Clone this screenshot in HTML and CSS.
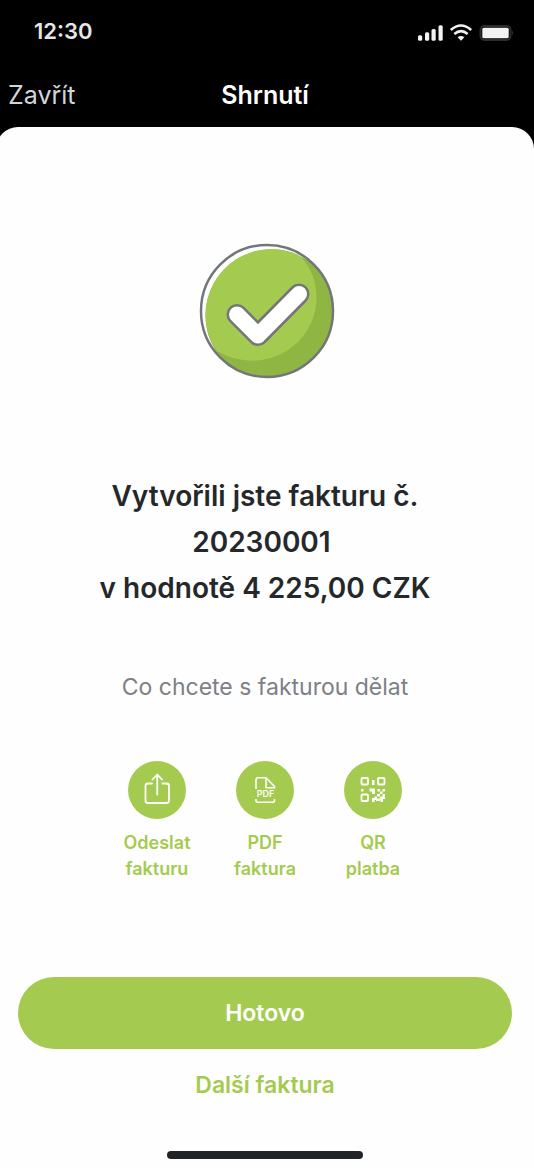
FILE: index.html
```html
<!DOCTYPE html>
<html lang="cs">
<head>
<meta charset="utf-8">
<meta name="viewport" content="width=device-width, initial-scale=1">
<title>Shrnutí</title>
<link rel="stylesheet" href="styles.css">
</head>
<body>
<div class="screen">
  <div class="status">
    <time class="clock">12:30</time>
    <svg class="status-icons" width="100" height="20" viewBox="0 -1 100 20" aria-hidden="true">
      <g fill="#f2f2f2">
        <rect x="4" y="13.300" width="4.200" height="5.500" rx="1.500"/>
        <rect x="11" y="10.300" width="4.200" height="8.500" rx="1.500"/>
        <rect x="17.500" y="7" width="4.200" height="11.800" rx="1.500"/>
        <rect x="24.500" y="3.300" width="4.200" height="15.500" rx="1.500"/>
        <path d="M47 18.800 L43.600 15.300 Q47 12.700 50.400 15.300 Z"/>
        <rect x="68.300" y="5.800" width="26.400" height="10.400" rx="1.500"/>
      </g>
      <g fill="none" stroke="#f2f2f2" stroke-width="2.500">
        <path d="M36.800 8 Q47 -1 57.200 8"/>
        <path d="M40.300 12 Q47 6.300 53.700 12"/>
      </g>
      <rect x="66.500" y="4" width="30" height="14" rx="4" fill="none" stroke="#2c2c2c" stroke-width="2"/>
      <path d="M98 8.500 Q100.500 11 98 13.500 Z" fill="#2c2c2c"/>
    </svg>
  </div>
  <header class="nav">
    <button class="close" type="button">Zavřít</button>
    <h1 class="nav-title">Shrnutí</h1>
  </header>
  <main class="sheet">
    <svg class="success" width="160" height="160" viewBox="-2 0 160 160" aria-hidden="true">
      <defs><clipPath id="disc"><circle cx="80" cy="81" r="66"/></clipPath></defs>
      <circle cx="80" cy="81" r="66" fill="#fff"/>
      <g clip-path="url(#disc)">
        <circle cx="84.500" cy="85.500" r="66" fill="#8fb543"/>
        <path d="M18.500 85.500 A66 66 0 0 1 112 25 C136 48 135 88 111 112 C88 134 56 136 30 121 Q18.500 105 18.500 85.500 Z" fill="#a4cb50"/>
      </g>
      <circle cx="80" cy="81" r="66" fill="none" stroke="#71767b" stroke-width="2.500"/>
      <g fill="none" stroke-linecap="round" stroke-linejoin="round">
        <path d="M50 84.500 L71 105.500 L112 64" stroke="#71767b" stroke-width="21"/>
        <path d="M50 84.500 L71 105.500 L112 64" stroke="#fff" stroke-width="16"/>
      </g>
    </svg>
    <h2 class="headline">Vytvořili jste fakturu č.<br>20230001&nbsp;<br>v hodnotě 4 225,00 CZK</h2>
    <p class="question">Co chcete s fakturou dělat</p>
    <div class="actions">
      <button class="action" type="button">
        <span class="disc"><svg width="58" height="58" viewBox="0 0 58 58" fill="none" stroke="#fff" stroke-width="1.800" stroke-linecap="round" stroke-linejoin="round" aria-hidden="true">
          <path d="M24 22.500 H20 Q17.500 22.500 17.500 25 V39.500 Q17.500 42 20 42 H38.500 Q41 42 41 39.500 V25 Q41 22.500 38.500 22.500 H34.500 M29.250 33.500 V14 M24.500 18.500 L29.250 13.500 L34 18.500"/>
        </svg></span>
        <span class="label">Odeslat fakturu</span>
      </button>
      <button class="action" type="button">
        <span class="disc"><svg width="58" height="58" viewBox="0 0 58 58" fill="none" stroke="#fff" stroke-width="1.600" stroke-linejoin="round" aria-hidden="true">
          <path d="M20 28 V19 Q20 16.800 22 16.800 H30 L38.500 25.500 V27.500 M30 16.800 V26.800 H38.500 M20 38 V39.500 Q20 41.200 22 41.200 H36.500 Q38.500 41.200 38.500 39.500 V38"/>
          <text class="pdf" x="29.500" y="36" text-anchor="middle" stroke="none" fill="#fff">PDF</text>
        </svg></span>
        <span class="label">PDF faktura</span>
      </button>
      <button class="action" type="button">
        <span class="disc"><svg width="58" height="58" viewBox="0 0 58 58" aria-hidden="true">
          <g fill="none" stroke="#fff" stroke-width="1.800">
            <rect x="17.500" y="17" width="6.500" height="6.500" rx="1"/>
            <rect x="34" y="17" width="6.500" height="6.500" rx="1"/>
            <rect x="17.500" y="33.500" width="6.500" height="6.500" rx="1"/>
          </g>
          <path fill="#fff" d="M28 19h2.500v5h-2.500z M17 28h2.500v2.500h-2.500z M25.500 27.500h5.500v5.500h-3v-2.500h-2.500z M33.500 28h2.500v2.500h-2.500z M38.500 28h2.500v2.500h-2.500z M36 30.500h2.500v2.500h-2.500z M33 33h3v2.500h-3z M38.500 33h2.500v5h-2.500z M36 35.500h2.500v3h-2.500z M30.500 35.500h2.500v2h3v2.500h-4v-1h-1.500v2h-2.500v-4h2.500z M36.500 38h2.500v3h-2.500z"/>
        </svg></span>
        <span class="label">QR platba</span>
      </button>
    </div>
    <button class="primary" type="button">Hotovo</button>
    <button class="secondary" type="button">Další faktura</button>
    <div class="home"></div>
  </main>
</div>
</body>
</html>
```
FILE: styles.css
```css
* { box-sizing: border-box; }
html { background: #000; overflow-x: hidden; }
body {
  margin: 0;
  font-family: Inter, "Noto Sans", sans-serif;
  color: #25282b;
}
button {
  border: 0;
  padding: 0;
  background: none;
  font: inherit;
  cursor: pointer;
}
.screen {
  display: flex;
  flex-direction: column;
  min-height: 100vh;
  margin-left: -4px;
  background: #000;
}
.status {
  display: flex;
  align-items: center;
  justify-content: space-between;
  height: 62px;
  padding: 0 20px 0 38px;
  color: #e6e6e6;
}
.clock { font-size: 22px; font-weight: 600; }
.nav {
  display: grid;
  grid-template-columns: 1fr auto 1fr;
  align-items: center;
  height: 65px;
  padding: 0 12px;
}
.close {
  justify-self: start;
  color: #d4d5d8;
  font-size: 25px;
}
.nav-title {
  margin: 0;
  color: #fff;
  font-size: 25px;
  font-weight: 600;
}
.sheet {
  flex: 1;
  display: flex;
  flex-direction: column;
  align-items: center;
  padding: 103px 22px 9px;
  border-radius: 22px 22px 0 0;
  background: #fefefe;
}
.headline {
  margin: 83px 0 0;
  font-size: 28px;
  font-weight: 600;
  line-height: 46px;
  text-align: center;
}
.question {
  margin: 60px 0 0;
  color: #7d8085;
  font-size: 23px;
  line-height: 32px;
  text-align: center;
}
.actions {
  display: flex;
  gap: 28px;
  margin-top: 58px;
}
.action {
  display: flex;
  flex-direction: column;
  align-items: center;
  gap: 11px;
  width: 80px;
  color: #a4cb50;
  font-size: 18px;
  font-weight: 600;
  line-height: 26px;
}
.disc {
  display: flex;
  border-radius: 50%;
  background: #a4cb50;
}
.label { width: min-content; }
.pdf { font: 600 9px Inter, sans-serif; }
.primary {
  width: 100%;
  height: 72px;
  margin-top: 95px;
  border-radius: 36px;
  background: #a4cb50;
  color: #fff;
  font-size: 23px;
  font-weight: 600;
}
.secondary {
  margin-top: 20px;
  color: #a4cb50;
  font-size: 23px;
  font-weight: 600;
  line-height: 32px;
}
.home {
  width: 196px;
  height: 8px;
  margin-top: auto;
  border-radius: 4px;
  background: #202326;
}
```
